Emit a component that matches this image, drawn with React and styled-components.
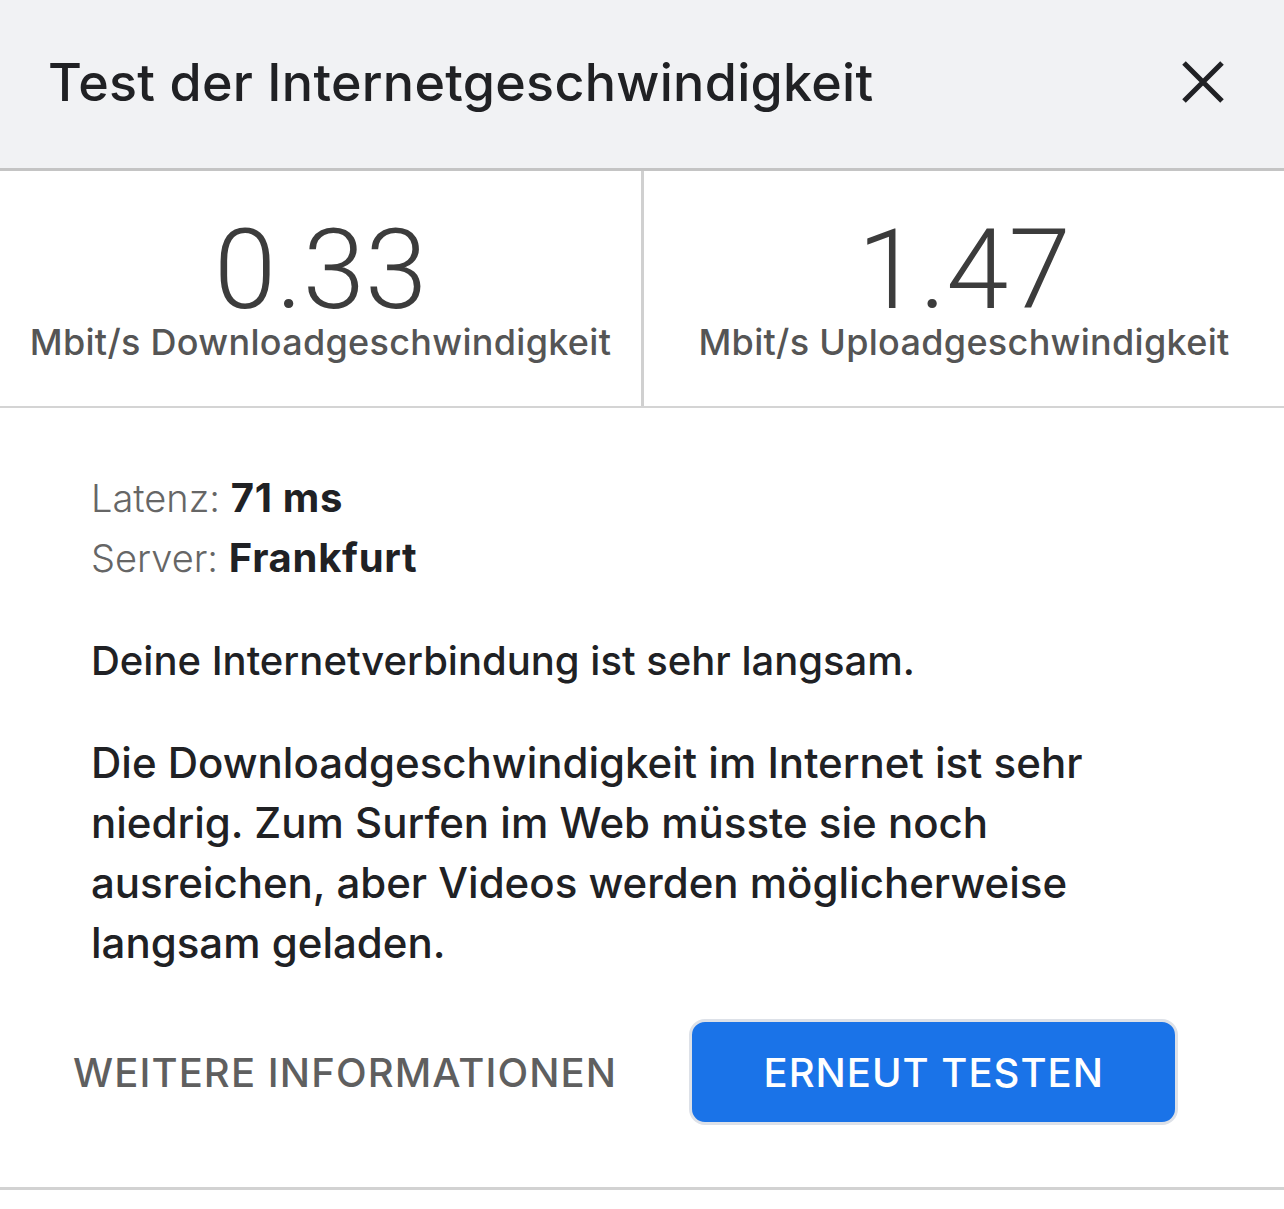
import React from 'react';
import styled, { createGlobalStyle } from 'styled-components';

const Global = createGlobalStyle`
  body {
    margin: 0;
    background: #fff;
    font-family: Inter, Roboto, 'Liberation Sans', sans-serif;
  }
`;

const Dialog = styled.div`
  width: 1284px;
  display: flex;
  flex-direction: column;
`;

const Header = styled.header`
  height: 171px;
  box-sizing: border-box;
  background: #f1f2f4;
  border-bottom: 3px solid #c4c4c4;
  display: flex;
  align-items: center;
  justify-content: space-between;
  padding: 0 57px 4px 48px;
`;

const Title = styled.h1`
  margin: 0;
  font-size: 52px;
  font-weight: 500;
  color: #202124;
  letter-spacing: 0.3px;
`;

const Close = styled.button`
  border: 0;
  background: none;
  padding: 0;
  width: 48px;
  height: 48px;
  display: flex;
  cursor: pointer;
`;

const Stats = styled.div`
  display: grid;
  grid-template-columns: 644px 1fr;
  height: 235px;
  border-bottom: 2px solid #d4d4d4;
`;

const Stat = styled.div`
  display: flex;
  flex-direction: column;
  align-items: center;
  padding-top: 52px;
  ${p => p.divided && 'border-right: 3px solid #d0d0d0;'}
`;

const Value = styled.div`
  font-family: Roboto, sans-serif;
  font-size: 112px;
  font-weight: 300;
  color: #3c3c3c;
  line-height: 94px;
`;

const Unit = styled.div`
  margin-top: 5px;
  font-size: 36px;
  font-weight: 500;
  color: #555;
  line-height: 40px;
  letter-spacing: 0.3px;
`;

const Body = styled.div`
  padding: 60px 0 0 91px;
`;

const Meta = styled.div`
  font-size: 38px;
  line-height: 60px;
  color: #666;
  font-weight: 300;
`;

const Strong = styled.span`
  font-size: 40px;
  font-weight: 700;
  color: #202124;
  letter-spacing: 0.7px;
`;

const Text = styled.p`
  margin: ${p => p.top}px 0 0;
  font-size: ${p => p.size}px;
  line-height: 60px;
  font-weight: 500;
  color: #202124;
  max-width: 1010px;
`;

const Actions = styled.div`
  display: flex;
  align-items: center;
  padding: 46px 0 62px 73px;
  gap: 72px;
  border-bottom: 3px solid #d2d2d2;
`;

const TextButton = styled.button`
  border: 0;
  background: none;
  padding: 0;
  font-family: Inter, sans-serif;
  font-size: 40px;
  font-weight: 500;
  color: #5f5f5f;
  letter-spacing: 1.1px;
`;

const PrimaryButton = styled.button`
  width: 489px;
  height: 106px;
  box-sizing: border-box;
  border: 3px solid #dde1e8;
  border-radius: 16px;
  background: #1a73e8;
  color: #fff;
  font-family: Inter, sans-serif;
  font-size: 40px;
  font-weight: 500;
  letter-spacing: 1px;
`;

export default function App() {
  return (
    <>
      <Global />
      <Dialog>
        <Header>
          <Title>Test der Internetgeschwindigkeit</Title>
          <Close aria-label="Schließen">
            <svg width="48" height="48" viewBox="0 0 48 48">
              <path d="M5 5 L43 43 M43 5 L5 43" stroke="#202124" strokeWidth="5" />
            </svg>
          </Close>
        </Header>
        <Stats>
          <Stat divided>
            <Value>0.33</Value>
            <Unit>Mbit/s Downloadgeschwindigkeit</Unit>
          </Stat>
          <Stat>
            <Value>1.47</Value>
            <Unit>Mbit/s Uploadgeschwindigkeit</Unit>
          </Stat>
        </Stats>
        <Body>
          <Meta>Latenz: <Strong>71 ms</Strong></Meta>
          <Meta>Server: <Strong>Frankfurt</Strong></Meta>
          <Text top={43} size={40}>Deine Internetverbindung ist sehr langsam.</Text>
          <Text top={42} size={42}>
            Die Downloadgeschwindigkeit im Internet ist sehr niedrig. Zum Surfen im Web müsste sie noch ausreichen, aber Videos werden möglicherweise langsam geladen.
          </Text>
        </Body>
        <Actions>
          <TextButton>WEITERE INFORMATIONEN</TextButton>
          <PrimaryButton>ERNEUT TESTEN</PrimaryButton>
        </Actions>
      </Dialog>
    </>
  );
}
